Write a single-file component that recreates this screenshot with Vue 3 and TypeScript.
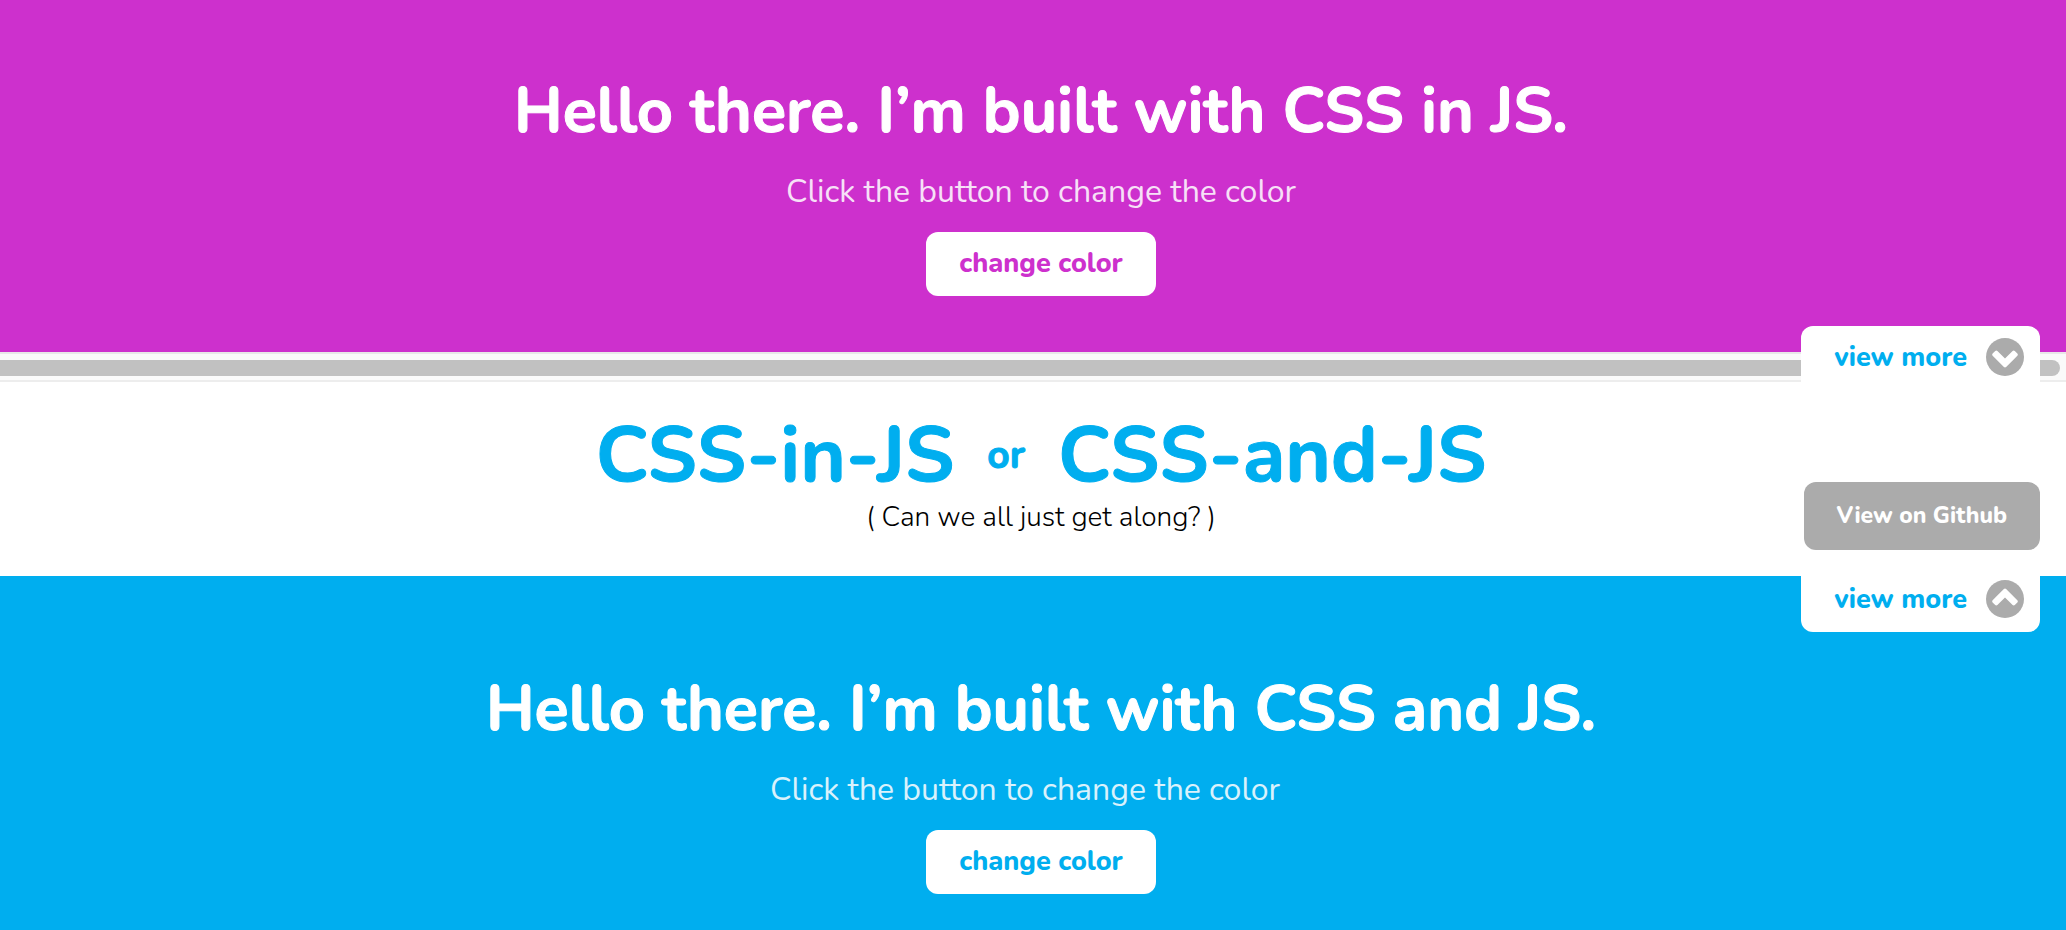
<script setup lang="ts">
import { ref } from 'vue'

const palette = ['#cd30cd', '#00aeef', '#f05a28', '#39b54a']
const topColor = ref(0)
const bottomColor = ref(1)

function next(index: number): number {
  return (index + 1) % palette.length
}
</script>

<template>
  <main class="page">
    <section class="hero hero-top" :style="{ '--accent': palette[topColor] }">
      <h1>Hello there. I’m built with CSS in JS.</h1>
      <p class="hint">Click the button to change the color</p>
      <button class="change" type="button" @click="topColor = next(topColor)">change color</button>
    </section>

    <div class="scrollbar"><div class="thumb"></div></div>

    <section class="middle">
      <h2 class="title">
        <span>CSS-in-JS</span>
        <small>or</small>
        <span>CSS-and-JS</span>
      </h2>
      <p class="tagline">( Can we all just get along? )</p>
      <a class="github" href="#github">View on Github</a>
      <button class="tab tab-top" type="button">
        view more
        <svg viewBox="128 128 1536 1536" aria-hidden="true">
          <circle cx="896" cy="896" r="768" fill="#ababab" />
          <path fill="#fff" d="M941 1299l326-326 128-128q19-19 19-45t-19-45l-102-102q-19-19-45-19t-45 19L896 960 589 653q-19-19-45-19t-45 19L397 755q-19 19-19 45t19 45l454 454q19 19 45 19t45-19z" />
        </svg>
      </button>
      <button class="tab tab-bottom" type="button">
        view more
        <svg class="up" viewBox="128 128 1536 1536" aria-hidden="true">
          <circle cx="896" cy="896" r="768" fill="#ababab" />
          <path fill="#fff" d="M941 1299l326-326 128-128q19-19 19-45t-19-45l-102-102q-19-19-45-19t-45 19L896 960 589 653q-19-19-45-19t-45 19L397 755q-19 19-19 45t19 45l454 454q19 19 45 19t45-19z" />
        </svg>
      </button>
    </section>

    <section class="hero hero-bottom" :style="{ '--accent': palette[bottomColor] }">
      <h1>Hello there. I’m built with CSS and JS.</h1>
      <p class="hint">Click the button to change the color</p>
      <button class="change" type="button" @click="bottomColor = next(bottomColor)">change color</button>
    </section>
  </main>
</template>

<style>
body {
  margin: 0;
  background: #fff;
}
</style>

<style scoped>
.page {
  display: flex;
  flex-direction: column;
  min-height: 100vh;
  font-family: Nunito, "Nunito Sans", Lato, "Open Sans", sans-serif;
}

h1,
h2,
p {
  margin: 0;
}

button {
  border: 0;
  font-family: inherit;
  cursor: pointer;
}

.hero {
  display: flex;
  flex-direction: column;
  align-items: center;
  background: var(--accent);
  color: #fff;
}

.hero-top {
  padding: 67px 0 56px 16px;
}

.hero-bottom {
  flex: 1;
  padding: 89px 0 36px 16px;
}

h1 {
  font-size: 63px;
  line-height: 88px;
  font-weight: 700;
  -webkit-text-stroke: 1px currentColor;
}

.hint {
  margin: 14px 0 18px;
  font-size: 32px;
  line-height: 45px;
  font-weight: 400;
  opacity: 0.85;
}

.hero-bottom .hint {
  padding-right: 32px;
}

.change {
  height: 64px;
  padding: 0 33px 2px;
  border-radius: 12px;
  background: #fff;
  color: var(--accent);
  font-size: 27px;
  font-weight: 800;
}

.scrollbar {
  box-sizing: border-box;
  height: 30px;
  padding: 6px 6px 4px 0;
  border-top: 2px solid #e8e8e8;
  border-bottom: 2px solid #ededed;
  background: #fafafa;
}

.thumb {
  height: 16px;
  border-radius: 0 8px 8px 0;
  background: #c1c1c1;
}

.middle {
  position: relative;
  display: flex;
  flex-direction: column;
  align-items: center;
  padding: 34px 0 38px 16px;
  background: #fff;
}

.title {
  display: flex;
  align-items: center;
  gap: 33px;
  color: #00aeef;
  font-size: 78px;
  line-height: 80px;
  font-weight: 700;
  -webkit-text-stroke: 1px currentColor;
}

.title small {
  font-size: 39px;
}

.tagline {
  color: #000;
  font-size: 28px;
  line-height: 42px;
  font-weight: 300;
}

.github {
  position: absolute;
  right: 26px;
  bottom: 26px;
  padding: 0 33px;
  border-radius: 12px;
  background: #ababab;
  color: #fff;
  font-size: 23px;
  line-height: 68px;
  font-weight: 800;
  text-decoration: none;
}

.tab {
  position: absolute;
  right: 26px;
  z-index: 1;
  display: flex;
  align-items: center;
  gap: 19px;
  height: 62px;
  padding: 0 16px 0 33px;
  background: #fff;
  color: #00aeef;
  font-size: 27px;
  font-weight: 800;
}

.tab-top {
  top: -56px;
  border-radius: 12px 12px 0 0;
}

.tab-bottom {
  bottom: -56px;
  padding-bottom: 4px;
  border-radius: 0 0 12px 12px;
}

.tab svg {
  width: 38px;
  height: 38px;
}

.tab .up {
  transform: rotate(180deg);
}
</style>
